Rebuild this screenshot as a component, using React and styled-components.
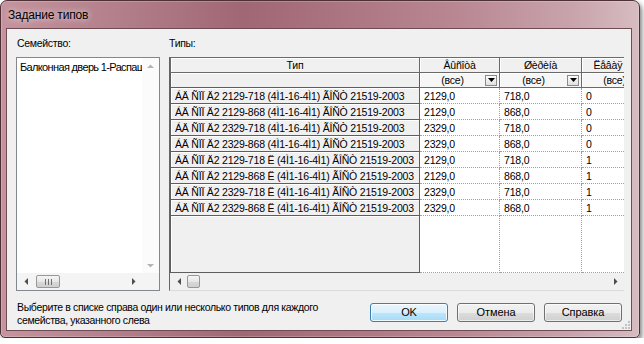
import React from "react";
import styled, { createGlobalStyle } from "styled-components";

const GlobalStyle = createGlobalStyle`
  * {
    box-sizing: border-box;
  }
  body {
    margin: 0;
    background: #fff;
    font-family: "Liberation Sans", Arial, sans-serif;
    font-size: 10.5px;
    letter-spacing: -0.3px;
    color: #000;
  }
`;

const Window = styled.div`
  width: 640px;
  height: 338px;
  display: flex;
  flex-direction: column;
  border: 1px solid #4e3037;
  border-radius: 7px 7px 5px 5px;
  background: linear-gradient(
    90deg,
    #c5949e 0%,
    #b27f8a 18%,
    #a06774 38%,
    #ac7682 55%,
    #b98893 72%,
    #c9a4ac 90%,
    #d6bcc1 100%
  );
  box-shadow: inset 0 0 0 1px rgba(255, 255, 255, 0.2),
    2px 3px 5px rgba(0, 0, 0, 0.5);
`;

const TitleBar = styled.div`
  height: 27px;
  display: flex;
  align-items: center;
  padding-left: 7px;
  font-size: 12px;
  letter-spacing: -0.2px;
  text-shadow: 0 0 6px rgba(255, 255, 255, 0.9);
`;

const Client = styled.div`
  flex: 1;
  position: relative;
  display: flex;
  flex-direction: column;
  margin: 0 7px 6px 5px;
  padding: 8px 7px 0 9px;
  background: #f0f0f0;
  border: 1px solid #6e4c54;
`;

const Main = styled.div`
  display: flex;
  gap: 9px;
`;

const Column = styled.div`
  display: flex;
  flex-direction: column;
  gap: 7px;
  width: ${(p) => p.width}px;
`;

const Label = styled.div`
  height: 13px;
  line-height: 13px;
  padding-left: ${(p) => p.indent || 0}px;
`;

const ListBox = styled.div`
  height: 234px;
  display: grid;
  grid-template-columns: 1fr 17px;
  grid-template-rows: 1fr 17px;
  border: 1px solid #828790;
  background: #fff;
`;

const ListContent = styled.div`
  overflow: hidden;
  white-space: nowrap;
  padding: 2px 0 0 3px;
  line-height: 14px;
  font-size: 11px;
  letter-spacing: -0.65px;
`;

const VScroll = styled.div`
  display: flex;
  flex-direction: column;
  justify-content: space-between;
  align-items: center;
  padding: 6px 0 5px;
  background: #fbfbfb;
`;

const HScroll = styled.div`
  display: flex;
  align-items: center;
  height: 17px;
  background: ${(p) => p.bg || "#f4f4f4"};
`;

const ArrowBtn = styled.div`
  width: 17px;
  height: 100%;
  display: flex;
  align-items: center;
  justify-content: center;
  flex: none;
`;

const Track = styled.div`
  flex: 1;
  display: flex;
  align-items: center;
`;

const Thumb = styled.div`
  width: ${(p) => p.width}px;
  height: 13px;
  margin-left: ${(p) => p.offset || 0}px;
  border: 1px solid #979797;
  border-radius: 2px;
  background: linear-gradient(#f6f6f6, #e6e6e6 50%, #d8d8d8 51%, #cfcfcf);
  display: flex;
  align-items: center;
  justify-content: center;
`;

const Corner = styled.div`
  background: #f4f4f4;
`;

const GridBox = styled.div`
  height: 234px;
  display: flex;
  flex-direction: column;
  border-left: 1px solid #646464;
  border-bottom: 1px solid #dadada;
  background: #fff;
`;

const GridBody = styled.div`
  flex: 1;
  overflow: hidden;
`;

const Table = styled.table`
  border-collapse: collapse;
  table-layout: fixed;
  width: 491px;
  font-size: 10.5px;
  letter-spacing: -0.2px;
`;

const HeadCell = styled.th`
  height: 15px;
  padding: 0 2px;
  font-weight: normal;
  text-align: center;
  white-space: nowrap;
  overflow: hidden;
  background: #f0f0f0;
  border: 1px solid #6a6a6a;
  box-shadow: inset 1px 1px 0 #fff;
`;

const FilterCell = styled.td`
  height: 15px;
  padding: 0 2px 0 0;
  background: #f6f6f6;
  border: 1px solid #6a6a6a;
  box-shadow: inset 1px 1px 0 #fff;
`;

const FilterInner = styled.div`
  display: flex;
  align-items: center;
  white-space: nowrap;
`;

const FilterText = styled.span`
  flex: 1;
  text-align: center;
`;

const DropBtn = styled.span`
  width: 12px;
  height: 11px;
  flex: none;
  display: flex;
  align-items: center;
  justify-content: center;
  border: 1px solid #8a8a8a;
  background: linear-gradient(#fdfdfd, #e0e0e0);
`;

const TypeCell = styled.td`
  height: ${(p) => p.h || 16}px;
  padding: 0 4px;
  white-space: nowrap;
  overflow: hidden;
  vertical-align: middle;
  background: #f0f0f0;
  border: 1px solid #5e5e5e;
  box-shadow: inset 1px 1px 0 #fff;
`;

const DataCell = styled.td`
  height: ${(p) => p.h || 16}px;
  padding: 0 4px;
  white-space: nowrap;
  overflow: hidden;
  background: #fff;
  border-right: 1px dotted #a0a0a0;
  border-bottom: 1px dotted #a0a0a0;
`;

const Footer = styled.div`
  flex: 1;
  display: flex;
  align-items: center;
  justify-content: space-between;
  padding-top: 10px;
`;

const Hint = styled.div`
  line-height: 13px;
  padding-left: 1px;
  align-self: flex-start;
  letter-spacing: -0.35px;
`;

const Buttons = styled.div`
  display: flex;
  gap: 9px;
  margin-right: 2px;
  margin-top: -7px;
`;

const Button = styled.button`
  width: 78px;
  height: 19px;
  padding: 0;
  font-family: inherit;
  font-size: 11px;
  letter-spacing: -0.1px;
  color: #000;
  border-radius: 3px;
  border: 1px solid ${(p) => (p.primary ? "#3c7fb1" : "#707070")};
  background: ${(p) =>
    p.primary
      ? "linear-gradient(#eaf6fd, #d9f0fc 50%, #bee6fd 51%, #a7d9f5)"
      : "linear-gradient(#f2f2f2, #ebebeb 50%, #dddddd 51%, #cfcfcf)"};
  box-shadow: inset 0 0 0 1px
    ${(p) => (p.primary ? "rgba(255,255,255,0.8)" : "rgba(255,255,255,0.6)")};
`;

const Grip = styled.svg`
  position: absolute;
  right: 1px;
  bottom: 1px;
`;

const Arrow = ({ dir, color = "#4d4d4d" }) => {
  const horiz = dir === "left" || dir === "right";
  const w = horiz ? 4 : 7;
  const h = horiz ? 7 : 4;
  const pts = {
    left: "4,0 4,7 0.5,3.5",
    right: "0,0 0,7 3.5,3.5",
    up: "0,4 7,4 3.5,0.5",
    down: "0,0 7,0 3.5,3.5",
  };
  return (
    <svg width={w} height={h} viewBox={`0 0 ${w} ${h}`}>
      <polygon points={pts[dir]} fill={color} />
    </svg>
  );
};

const GripLines = () => (
  <svg width="7" height="6" viewBox="0 0 7 6">
    <rect x="0" y="0" width="1" height="6" fill="#6f6f6f" />
    <rect x="3" y="0" width="1" height="6" fill="#6f6f6f" />
    <rect x="6" y="0" width="1" height="6" fill="#6f6f6f" />
  </svg>
);

const DropArrow = () => (
  <svg width="7" height="4" viewBox="0 0 7 4">
    <polygon points="0,0 7,0 3.5,4" fill="#000" />
  </svg>
);

const columns = ["Âûñîòà", "Øèðèíà", "Ëåâàÿ ïåòëÿ"];

const rows = [
  ["ÁÄ ÑÏÏ Ä2 2129-718 (4Ì1-16-4Ì1) ÃÎÑÒ 21519-2003", "2129,0", "718,0", "0"],
  ["ÁÄ ÑÏÏ Ä2 2129-868 (4Ì1-16-4Ì1) ÃÎÑÒ 21519-2003", "2129,0", "868,0", "0"],
  ["ÁÄ ÑÏÏ Ä2 2329-718 (4Ì1-16-4Ì1) ÃÎÑÒ 21519-2003", "2329,0", "718,0", "0"],
  ["ÁÄ ÑÏÏ Ä2 2329-868 (4Ì1-16-4Ì1) ÃÎÑÒ 21519-2003", "2329,0", "868,0", "0"],
  ["ÁÄ ÑÏÏ Ä2 2129-718 Ë (4Ì1-16-4Ì1) ÃÎÑÒ 21519-2003", "2129,0", "718,0", "1"],
  ["ÁÄ ÑÏÏ Ä2 2129-868 Ë (4Ì1-16-4Ì1) ÃÎÑÒ 21519-2003", "2129,0", "868,0", "1"],
  ["ÁÄ ÑÏÏ Ä2 2329-718 Ë (4Ì1-16-4Ì1) ÃÎÑÒ 21519-2003", "2329,0", "718,0", "1"],
  ["ÁÄ ÑÏÏ Ä2 2329-868 Ë (4Ì1-16-4Ì1) ÃÎÑÒ 21519-2003", "2329,0", "868,0", "1"],
];

export default function App() {
  return (
    <>
      <GlobalStyle />
      <Window>
        <TitleBar>Задание типов</TitleBar>
        <Client>
          <Main>
            <Column width={144}>
              <Label indent={1}>Семейство:</Label>
              <ListBox>
                <ListContent>Балконная дверь 1-Распашная</ListContent>
                <VScroll>
                  <Arrow dir="up" color="#b4b4b4" />
                  <Arrow dir="down" color="#b4b4b4" />
                </VScroll>
                <HScroll>
                  <ArrowBtn>
                    <Arrow dir="left" />
                  </ArrowBtn>
                  <Track>
                    <Thumb width={24} offset={2}>
                      <GripLines />
                    </Thumb>
                  </Track>
                  <ArrowBtn>
                    <Arrow dir="right" />
                  </ArrowBtn>
                </HScroll>
                <Corner />
              </ListBox>
            </Column>
            <Column width={455}>
              <Label indent={-1}>Типы:</Label>
              <GridBox>
                <GridBody>
                  <Table>
                    <colgroup>
                      <col style={{ width: 249 }} />
                      <col style={{ width: 80 }} />
                      <col style={{ width: 82 }} />
                      <col style={{ width: 80 }} />
                    </colgroup>
                    <thead>
                      <tr>
                        <HeadCell>Тип</HeadCell>
                        {columns.map((c) => (
                          <HeadCell key={c}>{c}</HeadCell>
                        ))}
                      </tr>
                      <tr>
                        <TypeCell h={15} />
                        {columns.map((c) => (
                          <FilterCell key={c}>
                            <FilterInner>
                              <FilterText>(все)</FilterText>
                              <DropBtn>
                                <DropArrow />
                              </DropBtn>
                            </FilterInner>
                          </FilterCell>
                        ))}
                      </tr>
                    </thead>
                    <tbody>
                      {rows.map((r) => (
                        <tr key={r[0]}>
                          <TypeCell>{r[0]}</TypeCell>
                          <DataCell>{r[1]}</DataCell>
                          <DataCell>{r[2]}</DataCell>
                          <DataCell>{r[3]}</DataCell>
                        </tr>
                      ))}
                      <tr>
                        <TypeCell h={57} />
                        <DataCell h={57} />
                        <DataCell h={57} />
                        <DataCell h={57} />
                      </tr>
                    </tbody>
                  </Table>
                </GridBody>
                <HScroll bg="#f0f0f0">
                  <ArrowBtn>
                    <Arrow dir="left" />
                  </ArrowBtn>
                  <Track>
                    <Thumb width={13} />
                  </Track>
                  <ArrowBtn>
                    <Arrow dir="right" />
                  </ArrowBtn>
                </HScroll>
              </GridBox>
            </Column>
          </Main>
          <Footer>
            <Hint>
              Выберите в списке справа один или несколько типов для каждого
              <br />
              семейства, указанного слева
            </Hint>
            <Buttons>
              <Button primary>OK</Button>
              <Button>Отмена</Button>
              <Button>Справка</Button>
            </Buttons>
          </Footer>
          <Grip width="8" height="8" viewBox="0 0 8 8">
            <rect x="6" y="0" width="2" height="2" fill="#c2c2c2" />
            <rect x="3" y="3" width="2" height="2" fill="#c2c2c2" />
            <rect x="6" y="3" width="2" height="2" fill="#c2c2c2" />
            <rect x="0" y="6" width="2" height="2" fill="#c2c2c2" />
            <rect x="3" y="6" width="2" height="2" fill="#c2c2c2" />
            <rect x="6" y="6" width="2" height="2" fill="#c2c2c2" />
          </Grip>
        </Client>
      </Window>
    </>
  );
}
